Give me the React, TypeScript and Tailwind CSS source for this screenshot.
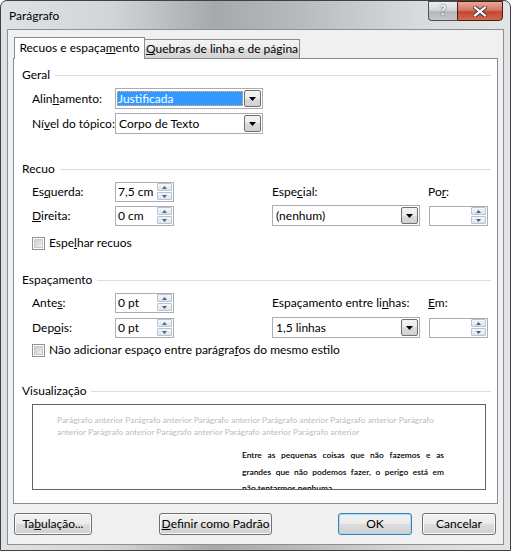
import React from "react";

function DropArrow() {
  return (
    <svg width="7" height="4" viewBox="0 0 7 4">
      <path d="M0 0h7L3.5 4z" fill="#000" />
    </svg>
  );
}

function Select({ value, selected }: { value: string; selected?: boolean }) {
  return (
    <div className="flex h-[21px] w-[148px] items-center border border-[#abadb3] bg-white pl-[1px] pr-[1px]">
      <div className="flex h-full flex-1 items-center py-[2px] pr-[1px]">
        {selected ? (
          <div className="flex h-full w-full items-center bg-[#3399ff] pl-[1px] text-white outline outline-1 -outline-offset-1 outline-dotted outline-[#e6b36a]">
            {value}
          </div>
        ) : (
          <div className="pl-[2px]">{value}</div>
        )}
      </div>
      <div className="flex h-[17px] w-[17px] items-center justify-center rounded-[2px] border border-[#707070] bg-[linear-gradient(#f3f3f3_0%,#ececec_50%,#dcdcdc_50%,#d0d0d0_100%)]">
        <DropArrow />
      </div>
    </div>
  );
}

function Spin({ value }: { value?: string }) {
  return (
    <div className="flex h-[20px] w-[59px] items-center border border-[#abadb3] bg-white pl-[2px] pr-[1px]">
      <span className="flex-1">{value}</span>
      <div className="flex w-[15px] flex-col gap-px">
        <div className="flex h-[8px] items-center justify-center rounded-[1px] border border-[#b6c3d2] bg-[linear-gradient(#f4f6f8,#dfe5ec)]">
          <svg width="5" height="3" viewBox="0 0 5 3">
            <path d="M0 3h5L2.5 0z" fill="#4d6185" />
          </svg>
        </div>
        <div className="flex h-[8px] items-center justify-center rounded-[1px] border border-[#b6c3d2] bg-[linear-gradient(#f4f6f8,#dfe5ec)]">
          <svg width="5" height="3" viewBox="0 0 5 3">
            <path d="M0 0h5L2.5 3z" fill="#4d6185" />
          </svg>
        </div>
      </div>
    </div>
  );
}

function Check({ children }: { children: React.ReactNode }) {
  return (
    <div className="flex h-[16px] items-center gap-[4px]">
      <div className="flex h-[13px] w-[13px] items-center justify-center border border-[#8e8f8f] bg-white">
        <div className="h-[9px] w-[9px] border border-[#c5c9ce] bg-[linear-gradient(135deg,#c8ccd2,#eeeff1)]" />
      </div>
      <span>{children}</span>
    </div>
  );
}

function Section({ title }: { title: string }) {
  return (
    <div className="flex h-[16px] items-center gap-[5px]">
      <span>{title}</span>
      <div className="h-px flex-1 bg-[#d5dfe5]" />
    </div>
  );
}

function Button({ children, def, w }: { children: React.ReactNode; def?: boolean; w: string }) {
  return (
    <div
      className={
        def
          ? `flex h-[22px] ${w} items-center justify-center rounded-[3px] border border-[#3c7fb1] bg-[linear-gradient(#f2f2f2_0%,#ebebeb_50%,#dddddd_50%,#cfcfcf_100%)] shadow-[inset_0_0_0_1px_#a6dcf5]`
          : `flex h-[22px] ${w} items-center justify-center rounded-[3px] border border-[#707070] bg-[linear-gradient(#f2f2f2_0%,#ebebeb_50%,#dddddd_50%,#cfcfcf_100%)] shadow-[inset_0_0_0_1px_#fbfbfb]`
      }
    >
      {children}
    </div>
  );
}

export default function App() {
  return (
    <div className="flex h-[551px] w-[511px] flex-col rounded-t-[7px] border border-[#3f4245] bg-[linear-gradient(90deg,#dfe2e5_0%,#d2d5d8_22%,#a6a9ac_42%,#b7babd_58%,#d8dadd_82%,#e2e4e6_100%)] font-['Segoe_UI',Lato,sans-serif] text-[12px] text-black">
      {/* barra de título */}
      <div className="flex h-[28px] items-start justify-between">
        <div className="pl-[8px] pt-[6px] text-[12px]">Parágrafo</div>
        <div className="mr-[7px] flex">
          <div className="flex h-[20px] w-[29px] items-center justify-center rounded-bl-[4px] border border-r-0 border-[#4d4f52] bg-[linear-gradient(#eceef0_0%,#d4d7da_45%,#b3b7bb_55%,#c4c7ca_100%)] text-[13px] font-bold text-white [text-shadow:0_0_2px_#222]">
            ?
          </div>
          <div className="flex h-[20px] w-[46px] items-center justify-center rounded-br-[4px] border border-[#4b1a14] bg-[linear-gradient(#e9a898_0%,#d77563_45%,#c44632_55%,#d06a4e_100%)]">
            <svg width="14" height="11" viewBox="0 0 14 11">
              <path d="M2 1.5L12 9.5M12 1.5L2 9.5" stroke="#3a3a3a" strokeWidth="4" strokeLinecap="square" />
              <path d="M2 1.5L12 9.5M12 1.5L2 9.5" stroke="#ffffff" strokeWidth="2.2" strokeLinecap="square" />
            </svg>
          </div>
        </div>
      </div>

      {/* área do diálogo */}
      <div className="mx-[6px] mb-[5px] flex flex-1 flex-col border border-[#8b9095] bg-[#f0f0f0] px-[5px] pt-[7px]">
        <div className="relative z-10 -mb-px flex h-[22px] items-end pl-px">
          <div className="flex h-[22px] w-[131px] items-center justify-center border border-b-0 border-[#898c95] bg-white pb-[2px]">
            Recuos e espaça<span className="underline">m</span>ento
          </div>
          <div className="flex h-[20px] w-[155px] items-center justify-center border border-l-0 border-[#898c95] bg-[linear-gradient(#f3f3f3_0%,#ebebeb_50%,#dddddd_50%,#d4d4d4_100%)]">
            <span className="underline">Q</span>uebras de linha e de página
          </div>
        </div>

        <div className="flex h-[446px] flex-col border border-[#898c95] bg-white pl-[8px] pr-[6px] pt-[8px]">
          <Section title="Geral" />
          <div className="mt-[5px] flex flex-col gap-[4px] pl-[10px]">
            <div className="flex h-[21px] items-center">
              <span className="w-[83px]">
                Alin<span className="underline">h</span>amento:
              </span>
              <Select value="Justificada" selected />
            </div>
            <div className="flex h-[21px] items-center">
              <span className="w-[83px]">
                Ní<span className="underline">v</span>el do tópico:
              </span>
              <Select value="Corpo de Texto" />
            </div>
          </div>

          <div className="mt-[27px]">
            <Section title="Recuo" />
          </div>
          <div className="mt-[4px] flex pl-[10px]">
            <div className="flex w-[240px] flex-col gap-[3px]">
              <div className="flex h-[21px] items-center">
                <span className="w-[83px]">
                  Es<span className="underline">q</span>uerda:
                </span>
                <Spin value="7,5 cm" />
              </div>
              <div className="flex h-[21px] items-center">
                <span className="w-[83px]">
                  <span className="underline">D</span>ireita:
                </span>
                <Spin value="0 cm" />
              </div>
            </div>
            <div className="flex flex-col gap-[3px]">
              <div className="flex h-[21px] items-center">
                <span className="w-[156px]">
                  Espe<span className="underline">c</span>ial:
                </span>
                <span>
                  Po<span className="underline">r</span>:
                </span>
              </div>
              <div className="flex h-[21px] items-center gap-[9px]">
                <Select value="(nenhum)" />
                <Spin />
              </div>
            </div>
          </div>
          <div className="mt-[9px] pl-[10px]">
            <Check>
              Espe<span className="underline">l</span>har recuos
            </Check>
          </div>

          <div className="mt-[21px]">
            <Section title="Espaçamento" />
          </div>
          <div className="mt-[4px] flex pl-[10px]">
            <div className="flex w-[240px] flex-col gap-[4px]">
              <div className="flex h-[21px] items-center">
                <span className="w-[83px]">
                  Ante<span className="underline">s</span>:
                </span>
                <Spin value="0 pt" />
              </div>
              <div className="flex h-[21px] items-center">
                <span className="w-[83px]">
                  Dep<span className="underline">o</span>is:
                </span>
                <Spin value="0 pt" />
              </div>
            </div>
            <div className="flex flex-col gap-[4px]">
              <div className="flex h-[21px] items-center">
                <span className="w-[156px]">
                  Espaçamento entre li<span className="underline">n</span>has:
                </span>
                <span>
                  <span className="underline">E</span>m:
                </span>
              </div>
              <div className="flex h-[21px] items-center gap-[9px]">
                <Select value="1,5 linhas" />
                <Spin />
              </div>
            </div>
          </div>
          <div className="mt-[4px] pl-[10px]">
            <Check>
              Não adicionar espaço entre parágra<span className="underline">f</span>os do mesmo estilo
            </Check>
          </div>

          <div className="mt-[25px]">
            <Section title="Visualização" />
          </div>
          <div className="ml-[10px] mr-[5px] mt-[5px] h-[86px] overflow-hidden border border-[#646464] bg-white">
            <div className="whitespace-nowrap pl-[24px] pt-[9px] text-[8.4px] leading-[12px] text-[#bdbdbd]">
              <div>Parágrafo anterior Parágrafo anterior Parágrafo anterior Parágrafo anterior Parágrafo anterior Parágrafo</div>
              <div>anterior Parágrafo anterior Parágrafo anterior Parágrafo anterior Parágrafo anterior</div>
            </div>
            <div className="ml-[209px] mt-[9px] w-[202px] whitespace-nowrap text-[8.4px] font-semibold leading-[16.5px] text-black">
              <div className="text-justify [text-align-last:justify]">Entre as pequenas coisas que não fazemos e as</div>
              <div className="text-justify [text-align-last:justify]">grandes que não podemos fazer, o perigo está em</div>
              <div>não tentarmos nenhuma</div>
            </div>
          </div>
        </div>

        <div className="mt-[9px] flex items-center">
          <div className="ml-px">
            <Button w="w-[78px]">
              Ta<span className="underline">b</span>ulação...
            </Button>
          </div>
          <div className="ml-[67px]">
            <Button w="w-[113px]">
              <span className="underline">D</span>efinir como Padrão
            </Button>
          </div>
          <div className="ml-[66px]">
            <Button w="w-[74px]" def>
              OK
            </Button>
          </div>
          <div className="ml-[10px]">
            <Button w="w-[74px]">Cancelar</Button>
          </div>
        </div>
      </div>
    </div>
  );
}
